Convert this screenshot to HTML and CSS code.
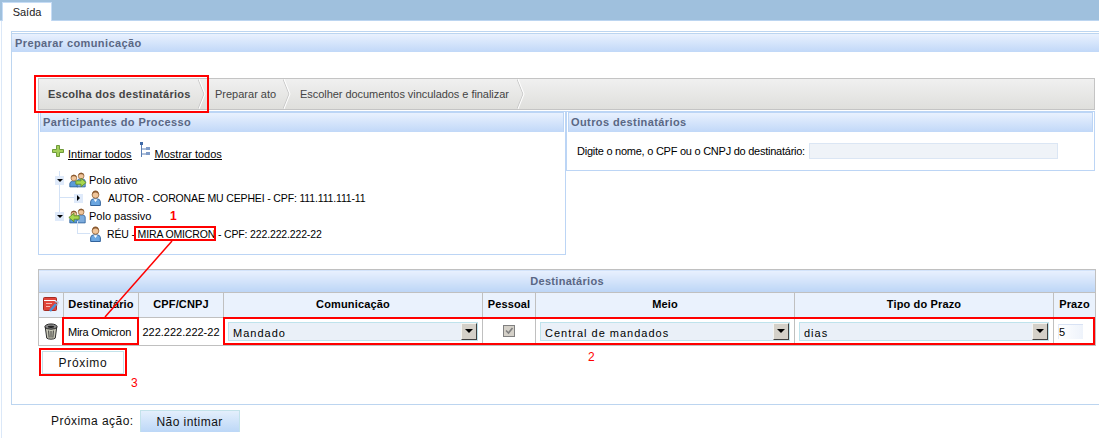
FILE: index.html
```html
<!DOCTYPE html>
<html lang="pt-BR">
<head>
    <meta charset="UTF-8">
    <meta name="viewport" content="width=device-width, initial-scale=1.0">
    <title>Preparar comunicação</title>
    <link rel="stylesheet" href="styles.css">
</head>
<body>
    <svg class="defs" width="0" height="0">
        <symbol id="user" viewBox="2.500 1 11 16.500">
            <path d="M3 17v-4c0-2 2-3 5-3s5 1 5 3v4z" fill="#6ba6e0" stroke="#2d5f99"/>
            <path d="M6 10.500h4l-2 3z" fill="#fff"/>
            <circle cx="8" cy="6" r="3.500" fill="#f0c59a" stroke="#8a5a30" stroke-width=".8"/>
            <path d="M4.500 6c0-3 1.500-4.500 3.500-4.500s3.500 1.500 3.500 4.500c-1-2-2-2.500-3.500-2.500s-2.500.5-3.500 2.500z" fill="#8a5a30"/>
        </symbol>
        <symbol id="group" viewBox="0 0 21 19">
            <path d="M1 18v-4c0-2 2-3 5-3s5 1 5 3v4z" fill="#5b9bd8" stroke="#2d5f99"/>
            <circle cx="6" cy="7" r="3.600" fill="#f0c59a" stroke="#8a5a30" stroke-width=".8"/>
            <path d="M2.500 7c0-3 1.500-4 3.500-4s3.500 1 3.500 4c-1-1.500-2-2-3.500-2s-2.500.5-3.500 2z" fill="#8a5a30"/>
            <path d="M10 15v-4c0-2 2-3 5-3s5 1 5 3v7h-10z" fill="#7cabdc" stroke="#2d5f99"/>
            <circle cx="15" cy="4.500" r="3.600" fill="#f0c59a" stroke="#8a5a30" stroke-width=".8"/>
            <path d="M11.500 4.500c0-3 1.500-4 3.500-4s3.500 1 3.500 4c-1-1.500-2-2-3.500-2s-2.500.5-3.500 2z" fill="#8a5a30"/>
        </symbol>
    </svg>

    <div class="tabbar">
        <div class="tab">Saída</div>
    </div>

    <div class="page">
        <div class="panel">
            <div class="panel-title">Preparar comunicação</div>
            <div class="panel-body">
                <div class="wizard">
                    <div class="step step-active">Escolha dos destinatários
                        <svg class="chevron" width="8" height="30" viewBox="0 0 8 30"><path d="M0 0l6 15-6 15" fill="none" stroke="#c8c8c8"/><path d="M1 0l6 15-6 15" fill="none" stroke="#fff"/></svg>
                    </div>
                    <div class="step step-second">Preparar ato
                        <svg class="chevron" width="8" height="30" viewBox="0 0 8 30"><path d="M0 0l6 15-6 15" fill="none" stroke="#c8c8c8"/><path d="M1 0l6 15-6 15" fill="none" stroke="#fff"/></svg>
                    </div>
                    <div class="step step-third">Escolher documentos vinculados e finalizar
                        <svg class="chevron" width="8" height="30" viewBox="0 0 8 30"><path d="M0 0l6 15-6 15" fill="none" stroke="#c8c8c8"/><path d="M1 0l6 15-6 15" fill="none" stroke="#fff"/></svg>
                    </div>
                </div>

                <div class="columns">
                    <div class="box box-left">
                        <div class="box-title">Participantes do Processo</div>
                        <div class="actions">
                            <a class="action action-first" href="#">
                                <svg width="12" height="12" viewBox="0 0 12 12"><path d="M4.500.5h3v4h4v3h-4v4h-3v-4h-4v-3h4z" fill="#a4cf5a" stroke="#6f9a3a"/></svg>
                                <span class="action-label">Intimar todos</span>
                            </a>
                            <a class="action" href="#">
                                <svg width="12" height="16" viewBox="0 0 12 16"><path d="M2.500 2v13M2.500 7h5M2.500 12h5" fill="none" stroke="#5b7fb5"/><rect x="1" y="0" width="3" height="3" fill="#3f6aa8"/><rect x="7" y="5" width="4" height="3" fill="#7f9cc8"/><rect x="7" y="10" width="4" height="3" fill="#7f9cc8"/></svg>
                                <span class="action-label">Mostrar todos</span>
                            </a>
                        </div>
                        <ul class="tree">
                            <li class="node node-pole">
                                <span class="expander"><span class="arrow-down"></span></span>
                                <span class="pole-icon">
                                    <svg width="17" height="16"><use href="#group"/></svg>
                                    <svg class="pole-arrow" width="12" height="11" viewBox="0 0 14 12"><path d="M1 4h6V1l6 5-6 5V8H1z" fill="#a8d84e" stroke="#5f8a28"/></svg>
                                </span>
                                <span>Polo ativo</span>
                            </li>
                            <li class="node node-person">
                                <span class="expander"><span class="arrow-right"></span></span>
                                <svg class="user-icon" width="11" height="16"><use href="#user"/></svg>
                                <span class="person-text">AUTOR - CORONAE MU CEPHEI - CPF: 111.111.111-11</span>
                            </li>
                            <li class="node node-pole">
                                <span class="expander"><span class="arrow-down"></span></span>
                                <span class="pole-icon">
                                    <svg width="17" height="16"><use href="#group"/></svg>
                                    <svg class="pole-arrow pole-arrow-in" width="12" height="11" viewBox="0 0 14 12"><path d="M13 4H7V1L1 6l6 5V8h6z" fill="#a8d84e" stroke="#5f8a28"/></svg>
                                </span>
                                <span>Polo passivo</span>
                            </li>
                            <li class="node node-leaf">
                                <svg class="user-icon" width="11" height="16"><use href="#user"/></svg>
                                <span class="person-text">RÉU - MIRA OMICRON - CPF: 222.222.222-22</span>
                            </li>
                        </ul>
                    </div>
                    <div class="box box-right">
                        <div class="box-title">Outros destinatários</div>
                        <div class="search-row">
                            <label class="search-label" for="dest">Digite o nome, o CPF ou o CNPJ do destinatário:</label>
                            <input id="dest" class="search-input" type="text">
                        </div>
                    </div>
                </div>

                <table class="recipients">
                    <colgroup>
                        <col class="col-icon"><col class="col-name"><col class="col-cpf"><col class="col-wide"><col class="col-personal"><col class="col-wide"><col class="col-wide"><col class="col-term">
                    </colgroup>
                    <thead>
                        <tr><th class="table-title" colspan="8">Destinatários</th></tr>
                        <tr>
                            <th class="cell-icon">
                                <svg width="16" height="15" viewBox="0 0 16 15">
                                    <rect x=".5" y=".5" width="13" height="13" rx="1" fill="#e0443a" stroke="#a52a22"/>
                                    <path d="M1 3.500h12" stroke="#fff"/>
                                    <path d="M3 6.500h6M3 9.500h4" stroke="#f7b8b0"/>
                                    <path d="M7 14l6-7" stroke="#4a8fd6" stroke-width="2.500"/>
                                    <path d="M12 4l3 1.500-1 3" fill="none" stroke="#b8c4d4" stroke-width="1.500"/>
                                </svg>
                            </th>
                            <th>Destinatário</th>
                            <th>CPF/CNPJ</th>
                            <th>Comunicação</th>
                            <th>Pessoal</th>
                            <th>Meio</th>
                            <th>Tipo do Prazo</th>
                            <th>Prazo</th>
                        </tr>
                    </thead>
                    <tbody>
                        <tr>
                            <td class="cell-icon">
                                <svg width="16" height="17" viewBox="0 0 16 18">
                                    <ellipse cx="8" cy="4" rx="6.500" ry="3" fill="#8a8a8a" stroke="#222"/>
                                    <ellipse cx="8" cy="4" rx="3.500" ry="1.200" fill="#222"/>
                                    <path d="M2 5l1.500 11c1.500 1.500 7.500 1.500 9 0L14 5c-2 2-10 2-12 0z" fill="#c8c8b8" stroke="#222"/>
                                    <path d="M5.500 8l.5 7.500M8 8.500v7M10.500 8l-.5 7.500" stroke="#333"/>
                                </svg>
                            </td>
                            <td class="cell-name">Mira Omicron</td>
                            <td class="cell-center">222.222.222-22</td>
                            <td><span class="combo"><select><option>Mandado</option></select><span class="combo-btn"></span></span></td>
                            <td>
                                <svg class="check" width="12" height="12" viewBox="0 0 12 12">
                                    <rect x=".5" y=".5" width="11" height="11" fill="#d4d0c8" stroke="#808080"/>
                                    <path d="M3 5.500l2.500 2.500L9.500 3" fill="none" stroke="#808080" stroke-width="1.600"/>
                                </svg>
                            </td>
                            <td><span class="combo"><select><option>Central de mandados</option></select><span class="combo-btn"></span></span></td>
                            <td><span class="combo"><select><option>dias</option></select><span class="combo-btn"></span></span></td>
                            <td><input class="term-input" type="text" value="5"></td>
                        </tr>
                    </tbody>
                </table>

                <button class="next-btn">Próximo</button>
            </div>
        </div>

        <div class="footer-row">
            <span>Próxima ação:</span>
            <button class="skip-btn">Não intimar</button>
        </div>
    </div>

    <!-- red marks drawn over the screenshot -->
    <div class="mark mark-step"></div>
    <div class="mark mark-name"></div>
    <div class="mark mark-cell"></div>
    <div class="mark mark-row"></div>
    <div class="mark mark-next"></div>
    <svg class="mark-line" width="80" height="80" viewBox="0 0 80 80"><path d="M68 2L1 78" stroke="#f00" stroke-width="1.500" fill="none"/></svg>
    <span class="mark-num mark-num-1">1</span>
    <span class="mark-num mark-num-2">2</span>
    <span class="mark-num mark-num-3">3</span>
</body>
</html>
```

FILE: styles.css
```css
body {
    margin: 0;
    padding: 0;
    font-family: "Liberation Sans", Arial, sans-serif;
    font-size: 11px;
    color: #000;
    background: #fff;
    overflow: hidden;
    height: 438px;
}

.defs {
    position: absolute;
}

.tabbar {
    height: 20px;
    background: #9fc0dd;
    border-bottom: 1px solid #bcd5f0;
    padding-left: 2px;
}

.tab {
    width: 50px;
    height: 19px;
    margin-top: 2px;
    background: #fff;
    border: 1px solid #c6dcf5;
    border-bottom: none;
    box-sizing: border-box;
    float: left;
    text-align: center;
    line-height: 19px;
    color: #222;
}

.page {
    margin-left: 1px;
    border-left: 1px solid #dbe8f8;
    padding: 10px 0 0 9px;
    height: 417px;
    box-sizing: border-box;
}

.panel {
    border: 1px solid #bcd5f0;
    border-right: none;
    height: 374px;
    box-sizing: border-box;
    padding-top: 1px;
}

.panel-title {
    height: 18px;
    line-height: 18px;
    padding-left: 3px;
    font-weight: bold;
    color: #5a6784;
    letter-spacing: 0.4px;
    background: linear-gradient(#e9f1fe, #c1d8f8);
    border-top: 1px solid #bcd5f0;
}

.panel-body {
    padding: 26px 0 0 26px;
}

.wizard {
    display: flex;
    width: 1057px;
    height: 32px;
    box-sizing: border-box;
    border: 1px solid #c4c4c4;
    background: linear-gradient(#f0f0f0, #dfdfdc);
    color: #444;
}

.step {
    position: relative;
    box-sizing: border-box;
    height: 30px;
    line-height: 30px;
    padding-left: 9px;
}

.step-active {
    width: 167px;
    font-weight: bold;
    letter-spacing: 0.25px;
}

.step-second {
    width: 85px;
}

.step-third {
    width: 234px;
    letter-spacing: -0.05px;
}

.chevron {
    position: absolute;
    right: 0;
    top: 0;
}

.columns {
    display: flex;
    margin-top: 1px;
    align-items: flex-start;
}

.box {
    width: 528px;
    box-sizing: border-box;
    border: 1px solid #bcd5f5;
    padding: 0 1px 1px;
}

.box-left {
    height: 144px;
}

.box-right {
    width: 529px;
    height: 60px;
}

.box-title {
    height: 19px;
    line-height: 19px;
    padding-left: 2px;
    font-weight: bold;
    color: #5a6784;
    letter-spacing: 0.4px;
    background: linear-gradient(#e9f1fe, #c1d8f8);
    border: 1px solid #bcd5f5;
    border-bottom: none;
}

.actions {
    display: flex;
    gap: 7px;
    padding: 10px 0 0 12px;
    height: 23px;
}

.action {
    display: flex;
    align-items: flex-start;
    gap: 4px;
    color: #000;
}

.action-first svg {
    margin-top: 3px;
}

.action-label {
    text-decoration: underline;
    margin-top: 6px;
}

.tree {
    list-style: none;
    position: relative;
    margin: 0;
    padding: 6px 0 0 15px;
}

/* the pale line from the first pole down to the second */
.tree::before {
    content: "";
    position: absolute;
    left: 19px;
    top: 6px;
    height: 41px;
    border-left: 1px solid #d3e2f6;
}

.node {
    display: flex;
    align-items: center;
    height: 18px;
    position: relative;
}

.node-person {
    padding-left: 19px;
}

.node-person::before {
    content: "";
    position: absolute;
    left: 4px;
    top: 8px;
    width: 15px;
    border-top: 1px solid #d3e2f6;
}

.node-leaf {
    padding-left: 35px;
}

.node-leaf::before {
    content: "";
    position: absolute;
    left: 22px;
    top: -4px;
    width: 12px;
    height: 12px;
    border-left: 1px solid #d3e2f6;
    border-bottom: 1px solid #d3e2f6;
}

.expander {
    position: relative;
    width: 9px;
    height: 9px;
    background: #dfeafa;
    display: flex;
    align-items: center;
    justify-content: center;
    flex: none;
}

.arrow-down {
    border: 3px solid transparent;
    border-top: 3px solid #000;
    border-bottom: none;
}

.arrow-right {
    border: 3px solid transparent;
    border-left: 3px solid #000;
    border-right: none;
}

.pole-icon {
    position: relative;
    width: 17px;
    height: 16px;
    margin: 0 3px 0 5px;
    flex: none;
}

.pole-icon svg {
    display: block;
}

.pole-arrow {
    position: absolute;
    left: 6px;
    top: 5px;
}

.pole-arrow-in {
    left: -1px;
    top: 4px;
}

.user-icon {
    margin: 0 7px;
    flex: none;
}

.node-leaf .user-icon {
    margin-left: 0;
    margin-right: 6px;
}

.person-text {
    font-size: 10.5px;
    letter-spacing: -0.15px;
    white-space: nowrap;
}

.search-row {
    display: flex;
    align-items: center;
    padding: 11px 0 0 9px;
}

.search-label {
    letter-spacing: -0.25px;
    margin-right: 4px;
}

.search-input {
    width: 249px;
    height: 16px;
    box-sizing: border-box;
    border: 1px solid #dbe6f4;
    background: #eff3f8;
    padding: 0;
}

.recipients {
    width: 1057px;
    table-layout: fixed;
    border-collapse: collapse;
    margin-top: 14px;
}

.col-icon { width: 25px; }
.col-name { width: 75px; }
.col-cpf { width: 85px; }
.col-wide { width: 259px; }
.col-personal { width: 53px; }
.col-term { width: 42px; }

.recipients th,
.recipients td {
    border: 1px solid #c0c0c0;
    padding: 0;
}

.recipients th {
    height: 22px;
    padding-bottom: 2px;
    background: #eaf2fd;
    letter-spacing: 0.15px;
}

.recipients th.table-title {
    height: 22px;
    padding-bottom: 0;
    color: #5a6784;
    letter-spacing: 0.3px;
    background: linear-gradient(#e9f1fe, #bcd5f6);
}

.recipients td {
    height: 27px;
}

.cell-icon svg {
    display: block;
    margin: 0 auto;
}

.recipients td.cell-name {
    padding-left: 4px;
    letter-spacing: -0.25px;
}

.cell-center {
    text-align: center;
}

.combo {
    display: block;
    position: relative;
    margin: 0 4px;
}

.combo select {
    appearance: none;
    display: block;
    width: 100%;
    height: 19px;
    box-sizing: border-box;
    border: 1px solid #bfe3ec;
    border-radius: 0;
    background: #eaf0f8;
    padding: 2px 0 0 4px;
    font-family: inherit;
    font-size: 11px;
    letter-spacing: 1px;
    color: #000;
}

.combo-btn {
    position: absolute;
    right: 1px;
    top: 1px;
    width: 16px;
    height: 17px;
    box-sizing: border-box;
    background: #d4d0c8;
    border: 1px solid;
    border-color: #f4f4f0 #404040 #404040 #f4f4f0;
}

.combo-btn::after {
    content: "";
    position: absolute;
    left: 3px;
    top: 5px;
    border: 4px solid transparent;
    border-top: 4px solid #000;
    border-bottom: none;
}

.check {
    display: block;
    margin: 0 0 2px 20px;
}

.term-input {
    display: block;
    width: 25px;
    height: 15px;
    margin-left: 4px;
    box-sizing: border-box;
    border: none;
    border-top: 1px solid #d8e2f4;
    border-left: 1px solid #e4ecf8;
    background: linear-gradient(90deg, #fff, #eef3fb);
    padding: 0;
    font-family: inherit;
    font-size: 11px;
}

.next-btn {
    display: block;
    width: 82px;
    height: 23px;
    margin: 5px 0 0 4px;
    border: 1px solid #c3e2ea;
    background: #fff;
    font-family: inherit;
    font-size: 12px;
    letter-spacing: 0.7px;
    color: #111;
    padding: 0;
}

.footer-row {
    display: flex;
    align-items: center;
    gap: 6px;
    padding: 5px 0 0 40px;
    font-size: 12px;
    letter-spacing: 0.45px;
    color: #111;
}

.skip-btn {
    width: 100px;
    height: 22px;
    border: 1px solid #c3e2ea;
    border-bottom: none;
    background: linear-gradient(#e4effc, #bcd7f7);
    font-family: inherit;
    font-size: 12px;
    letter-spacing: 0.45px;
    color: #111;
    padding: 0;
}

.mark {
    position: absolute;
    box-sizing: border-box;
    border: 2px solid #f00;
}

.mark-step { left: 34px; top: 75px; width: 175px; height: 38px; }
.mark-name { left: 134px; top: 226px; width: 82px; height: 15px; }
.mark-cell { left: 62px; top: 317px; width: 77px; height: 28px; }
.mark-row { left: 223px; top: 317px; width: 872px; height: 28px; }
.mark-next { left: 39px; top: 348px; width: 88px; height: 28px; }

.mark-line {
    position: absolute;
    left: 104px;
    top: 239px;
}

.mark-num {
    position: absolute;
    color: #f00;
    font-size: 12px;
}

.mark-num-1 { left: 170px; top: 209px; font-weight: bold; }
.mark-num-2 { left: 588px; top: 350px; }
.mark-num-3 { left: 131px; top: 376px; }
```
